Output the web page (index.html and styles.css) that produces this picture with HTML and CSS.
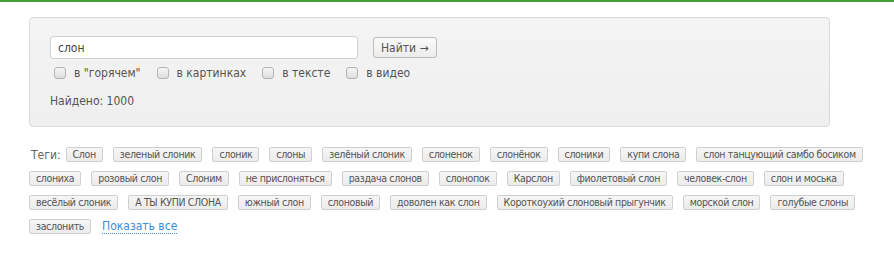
FILE: index.html
```html
<!DOCTYPE html>
<html lang="ru">
<head>
  <meta charset="UTF-8">
  <title>Поиск: слон</title>
  <link rel="stylesheet" href="styles.css">
</head>
<body>
  <div id="topline"></div>

  <div id="searchBox">
    <div class="searchRow">
      <input type="text" id="query" value="слон">
      <button id="findBtn">Найти &rarr;</button>
    </div>
    <div class="options">
      <label><span class="check"></span>в "горячем"</label>
      <label><span class="check"></span>в картинках</label>
      <label><span class="check"></span>в тексте</label>
      <label><span class="check"></span>в видео</label>
    </div>
    <div class="found">Найдено: 1000</div>
  </div>

  <div id="tags">
    <span class="tagsTitle">Теги:</span>
    <a class="tag">Слон</a>
    <a class="tag">зеленый слоник</a>
    <a class="tag">слоник</a>
    <a class="tag">слоны</a>
    <a class="tag">зелёный слоник</a>
    <a class="tag">слоненок</a>
    <a class="tag">слонёнок</a>
    <a class="tag">слоники</a>
    <a class="tag">купи слона</a>
    <a class="tag">слон танцующий самбо босиком</a>
    <a class="tag">слониха</a>
    <a class="tag">розовый слон</a>
    <a class="tag">Слоним</a>
    <a class="tag">не прислоняться</a>
    <a class="tag">раздача слонов</a>
    <a class="tag">слонопок</a>
    <a class="tag">Карслон</a>
    <a class="tag">фиолетовый слон</a>
    <a class="tag">человек-слон</a>
    <a class="tag">слон и моська</a>
    <a class="tag">весёлый слоник</a>
    <a class="tag">А ТЫ КУПИ СЛОНА</a>
    <a class="tag">южный слон</a>
    <a class="tag">слоновый</a>
    <a class="tag">доволен как слон</a>
    <a class="tag">Короткоухий слоновый прыгунчик</a>
    <a class="tag">морской слон</a>
    <a class="tag">голубые слоны</a>
    <a class="tag">заслонить</a>
    <a class="showAll" href="#">Показать все</a>
  </div>
</body>
</html>
```

FILE: styles.css
```css
body {
  margin: 0;
  font-family: "DejaVu Sans Condensed", "DejaVu Sans", Verdana, sans-serif;
  font-size: 12px;
  color: #555;
  background-color: #fff;
}

#topline {
  height: 2px;
  background-color: #4a9e3f;
}

#searchBox {
  width: 759px;
  margin: 15px 0 0 29px;
  padding: 18px 20px 16px 20px;
  border: 1px solid #dadada;
  border-radius: 4px;
  background: linear-gradient(#f4f4f4, #efefef);
}

.searchRow {
  display: flex;
  align-items: center;
  gap: 15px;
}

#query {
  width: 292px;
  height: 21px;
  padding: 0 7px;
  margin: 0;
  border: 1px solid #d0d0d0;
  border-radius: 3px;
  font-family: inherit;
  font-size: 12px;
  color: #444;
  background-color: #fff;
  box-sizing: content-box;
}

#findBtn {
  height: 21px;
  padding: 0 7px;
  border: 1px solid #bdbdbd;
  border-radius: 3px;
  background: linear-gradient(#fafafa, #ececec);
  font-family: inherit;
  font-size: 12px;
  color: #555;
}

.options {
  display: flex;
  gap: 16px;
  margin-top: 5px;
  padding-left: 4px;
}

.options label {
  display: flex;
  align-items: center;
  gap: 8px;
  line-height: 18px;
}

.check {
  display: inline-block;
  width: 10px;
  height: 10px;
  border: 1px solid #b5b5b5;
  border-radius: 3px;
  background: linear-gradient(#f6f6f6, #dedede);
}

.found {
  margin-top: 10px;
  line-height: 18px;
}

#tags {
  display: flex;
  flex-wrap: wrap;
  align-items: center;
  gap: 9px 10px;
  width: 860px;
  margin: 20px 0 0 29px;
}

.tagsTitle {
  color: #666;
  padding-left: 2px;
  margin-right: -5px;
}

.tag {
  display: inline-block;
  padding: 0 6px;
  line-height: 13px;
  border: 1px solid #cfcfcf;
  border-radius: 2px;
  background: linear-gradient(#f5f5f5, #ececec);
  color: #555;
  font-size: 10.5px;
  letter-spacing: -0.35px;
}

.showAll {
  color: #3d8bd1;
  text-decoration: none;
  border-bottom: 1px dotted #3d8bd1;
  line-height: 14px;
  margin-left: 1px;
}
```
